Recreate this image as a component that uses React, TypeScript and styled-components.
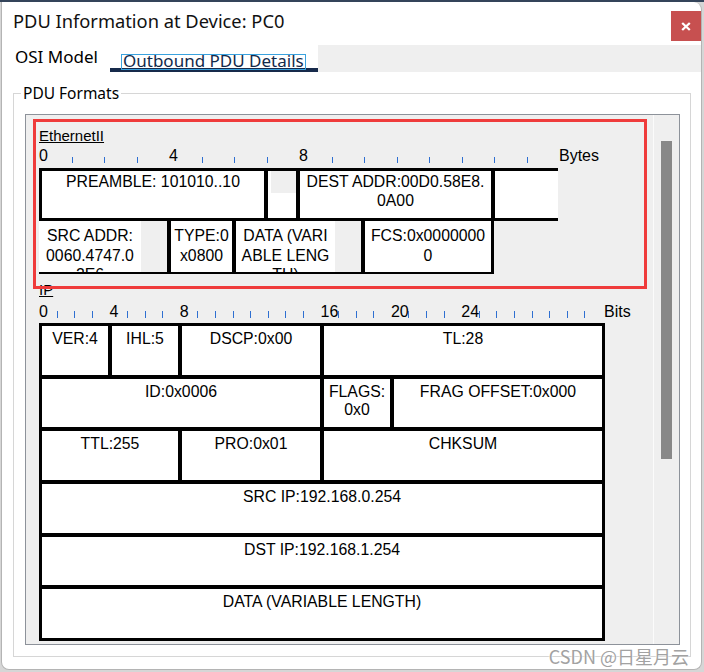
import React from "react";
import styled, { createGlobalStyle, css } from "styled-components";

const UI = `"Noto Sans", "Open Sans", "Liberation Sans", sans-serif`;
const PT = `"Liberation Sans", Arial, sans-serif`;

const GlobalStyle = createGlobalStyle`
  *, *::before, *::after { box-sizing: border-box; }
  html, body { margin: 0; padding: 0; }
  body {
    width: 704px;
    height: 672px;
    overflow: hidden;
    background: linear-gradient(to bottom, #34445a 0px, #34445a 2px, #d6d6d6 2px);
    font-family: ${UI};
    color: #000;
  }
`;

const Window = styled.div`
  position: relative;
  margin: 2px 0 0 1px;
  width: 701px;
  height: 668px;
  background: #fff;
  border: 1px solid #b4b4b4;
  border-top: 0;
  border-radius: 0 8px 8px 8px;
  overflow: hidden;
`;

const Header = styled.header`
  display: flex;
  justify-content: space-between;
  align-items: flex-start;
  height: 43px;
  padding-left: 11px;
`;

const Title = styled.h1`
  margin: 6px 0 0;
  font: 400 18.3px/26px ${UI};
  color: #111;
`;

const CloseButton = styled.button`
  margin-top: 9px;
  width: 30px;
  height: 30px;
  border: 0;
  padding: 0;
  background: #c75050;
  display: flex;
  align-items: center;
  justify-content: center;
`;

const TabBar = styled.nav`
  display: flex;
  height: 27px;
`;

const Tab = styled.div<{ $active?: boolean; $w: number }>`
  flex: none;
  width: ${(p) => p.$w}px;
  font: 17px/20px ${UI};
  color: #000;
  white-space: nowrap;
  ${(p) =>
    p.$active
      ? css`
          padding: 6px 0 0 11px;
          border-bottom: 4px solid #172a4b;
        `
      : css`
          padding: 2px 0 0 13px;
        `}
`;

const FocusLabel = styled.span`
  display: inline-block;
  height: 16px;
  line-height: 11px;
  padding: 0 1px;
  border: 1px solid #3aa2de;
  color: #12294a;
`;

const TabFill = styled.div`
  flex: 1;
  background: #efefef;
`;

const GroupBox = styled.fieldset`
  margin: 11px 0 0 11px;
  width: 678px;
  min-width: 0;
  padding: 11px 10px 11px 11px;
  border: 1px solid #d6d6d6;
`;

const GroupLegend = styled.legend`
  margin-left: -4px;
  padding: 0 2px;
  font: 15.5px/20px ${UI};
  color: #000;
`;

const Pane = styled.div`
  display: flex;
  height: 531px;
  border: 1px solid #8d929a;
  background: #efefef;
`;

const ContentArea = styled.div`
  flex: 1;
  overflow: hidden;
  display: flex;
  flex-direction: column;
`;

const ScrollTrack = styled.div`
  flex: none;
  width: 26px;
  border-left: 1px solid #fbfbfb;
  padding: 26px 0 0 7px;
  background: #efefef;
`;

const Thumb = styled.div`
  width: 11px;
  height: 318px;
  background: #888;
`;

const Highlight = styled.div`
  position: relative;
  z-index: 1;
  margin: 4px 6px 0 7px;
  border: 3px solid #ef3b3b;
  padding: 5px 0 12px 3px;
`;

const IPSection = styled.div`
  margin: -8px 0 0 13px;
`;

const SectionLabel = styled.div`
  font: 15px/18px ${PT};
  text-decoration: underline;
  text-underline-offset: 1px;
  width: max-content;
`;

const ScaleRow = styled.div<{ $unit: number; $slots: number; $gap: number }>`
  display: grid;
  grid-template-columns: repeat(${(p) => p.$slots}, ${(p) => p.$unit}px) max-content;
  height: 18px;
  margin-top: ${(p) => p.$gap}px;
  font: 16px/18px ${PT};
  white-space: nowrap;
`;

const Tick = styled.span<{ $top: number; $h: number }>`
  display: block;
  width: 1px;
  height: ${(p) => p.$h}px;
  margin-top: ${(p) => p.$top}px;
  background: #2e6fd1;
`;

const UnitLabel = styled.span<{ $offset: number }>`
  margin-left: ${(p) => p.$offset}px;
`;

const FrameRow = styled.div<{ $pad: string; $gapTop?: number }>`
  display: flex;
  gap: 4px;
  width: max-content;
  height: 53px;
  margin-top: ${(p) => p.$gapTop ?? 0}px;
  padding: ${(p) => p.$pad};
  background: #000;
`;

const Field = styled.div<{ $w: number; $bg?: string }>`
  flex: none;
  display: flex;
  width: ${(p) => p.$w}px;
  background: ${(p) => p.$bg ?? "#fff"};
  overflow: hidden;
`;

const FieldText = styled.div<{ $w?: number; $pt: number; $lh: number }>`
  flex: none;
  width: ${(p) => (p.$w ? `${p.$w}px` : "100%")};
  height: 100%;
  background: #fff;
  text-align: center;
  padding-top: ${(p) => p.$pt}px;
  font: 15.8px/${(p) => p.$lh}px ${PT};
  white-space: nowrap;
`;

const BlankLabel = styled.div`
  margin-left: 3px;
  width: 25px;
  height: 22px;
  background: #efefef;
`;

const HeaderGrid = styled.div`
  display: grid;
  grid-template-columns: 66px 66px 138px 66px 208px;
  grid-auto-rows: 48.67px;
  gap: 4px;
  width: max-content;
  margin-top: 2px;
  padding: 3px;
  background: #000;
`;

const HeaderCell = styled.div<{ $span: number }>`
  grid-column: span ${(p) => p.$span};
  background: #fff;
  text-align: center;
  padding-top: 4px;
  font: 15.8px/18px ${PT};
  white-space: nowrap;
  overflow: hidden;
`;

const Watermark = styled.div`
  position: absolute;
  right: 12px;
  bottom: 2px;
  font: 18px/22px "Noto Sans CJK SC", "Noto Sans", sans-serif;
  color: #a2a2a2;
  text-shadow: 0 0 2px #fff, 0 0 2px #fff;
  pointer-events: none;
`;

type ScaleProps = {
  unit: number;
  slots: number;
  labels: Record<number, string>;
  unitLabel: string;
  unitOffset: number;
  tickTop: number;
  tickH: number;
  gap: number;
};

function Scale({ unit, slots, labels, unitLabel, unitOffset, tickTop, tickH, gap }: ScaleProps) {
  return (
    <ScaleRow $unit={unit} $slots={slots} $gap={gap}>
      {Array.from({ length: slots }, (_, i) => (
        <div key={i}>{labels[i] !== undefined ? labels[i] : <Tick $top={tickTop} $h={tickH} />}</div>
      ))}
      <UnitLabel $offset={unitOffset}>{unitLabel}</UnitLabel>
    </ScaleRow>
  );
}

function Lines({ lines }: { lines: string[] }) {
  return (
    <>
      {lines.map((l, i) => (
        <React.Fragment key={i}>
          {i > 0 && <br />}
          {l}
        </React.Fragment>
      ))}
    </>
  );
}

const ipRows: { t: string[]; s: number }[][] = [
  [
    { t: ["VER:4"], s: 1 },
    { t: ["IHL:5"], s: 1 },
    { t: ["DSCP:0x00"], s: 1 },
    { t: ["TL:28"], s: 2 },
  ],
  [
    { t: ["ID:0x0006"], s: 3 },
    { t: ["FLAGS:", "0x0"], s: 1 },
    { t: ["FRAG OFFSET:0x000"], s: 1 },
  ],
  [
    { t: ["TTL:255"], s: 2 },
    { t: ["PRO:0x01"], s: 1 },
    { t: ["CHKSUM"], s: 2 },
  ],
  [{ t: ["SRC IP:192.168.0.254"], s: 5 }],
  [{ t: ["DST IP:192.168.1.254"], s: 5 }],
  [{ t: ["DATA (VARIABLE LENGTH)"], s: 5 }],
];

export default function App() {
  return (
    <>
      <GlobalStyle />
      <Window>
        <Header>
          <Title>PDU Information at Device: PC0</Title>
          <CloseButton aria-label="Close">
            <svg width="10" height="9" viewBox="0 0 10 9">
              <path d="M1.2 1 L8.8 8 M8.8 1 L1.2 8" stroke="#fff" strokeWidth="2.3" fill="none" />
            </svg>
          </CloseButton>
        </Header>
        <TabBar>
          <Tab $w={108}>OSI Model</Tab>
          <Tab $w={208} $active>
            <FocusLabel>Outbound PDU Details</FocusLabel>
          </Tab>
          <TabFill />
        </TabBar>
        <GroupBox>
          <GroupLegend>PDU Formats</GroupLegend>
          <Pane>
            <ContentArea>
              <Highlight>
                <SectionLabel>EthernetII</SectionLabel>
                <Scale
                  unit={32.5}
                  slots={16}
                  labels={{ 0: "0", 4: "4", 8: "8" }}
                  unitLabel="Bytes"
                  unitOffset={0}
                  tickTop={10}
                  tickH={6}
                  gap={2}
                />
                <FrameRow $pad="3px 0 3px 3px" $gapTop={3}>
                  <Field $w={222}>
                    <FieldText $pt={2} $lh={18.5}>PREAMBLE: 101010..10</FieldText>
                  </Field>
                  <Field $w={28}>
                    <BlankLabel />
                  </Field>
                  <Field $w={191}>
                    <FieldText $pt={2} $lh={18.5}>
                      <Lines lines={["DEST ADDR:00D0.58E8.", "0A00"]} />
                    </FieldText>
                  </Field>
                  <Field $w={63} />
                </FrameRow>
                <FrameRow $pad="0 3px 2px 0">
                  <Field $w={128} $bg="#efefef">
                    <FieldText $w={102} $pt={5} $lh={19.5}>
                      <Lines lines={["SRC ADDR:", "0060.4747.0", "2E6"]} />
                    </FieldText>
                  </Field>
                  <Field $w={61}>
                    <FieldText $pt={5} $lh={19.5}>
                      <Lines lines={["TYPE:0", "x0800"]} />
                    </FieldText>
                  </Field>
                  <Field $w={125} $bg="#efefef">
                    <FieldText $w={99} $pt={5} $lh={19.5}>
                      <Lines lines={["DATA (VARI", "ABLE LENG", "TH)"]} />
                    </FieldText>
                  </Field>
                  <Field $w={126}>
                    <FieldText $pt={5} $lh={19.5}>
                      <Lines lines={["FCS:0x0000000", "0"]} />
                    </FieldText>
                  </Field>
                </FrameRow>
              </Highlight>
              <IPSection>
                <SectionLabel>IP</SectionLabel>
                <Scale
                  unit={17.6}
                  slots={32}
                  labels={{ 0: "0", 4: "4", 8: "8", 16: "16", 20: "20", 24: "24" }}
                  unitLabel="Bits"
                  unitOffset={2}
                  tickTop={8}
                  tickH={7}
                  gap={4}
                />
                <HeaderGrid>
                  {ipRows.flatMap((row, ri) =>
                    row.map((c, ci) => (
                      <HeaderCell key={`${ri}-${ci}`} $span={c.s}>
                        <Lines lines={c.t} />
                      </HeaderCell>
                    ))
                  )}
                </HeaderGrid>
              </IPSection>
            </ContentArea>
            <ScrollTrack>
              <Thumb />
            </ScrollTrack>
          </Pane>
        </GroupBox>
        <Watermark>CSDN @日星月云</Watermark>
      </Window>
    </>
  );
}
